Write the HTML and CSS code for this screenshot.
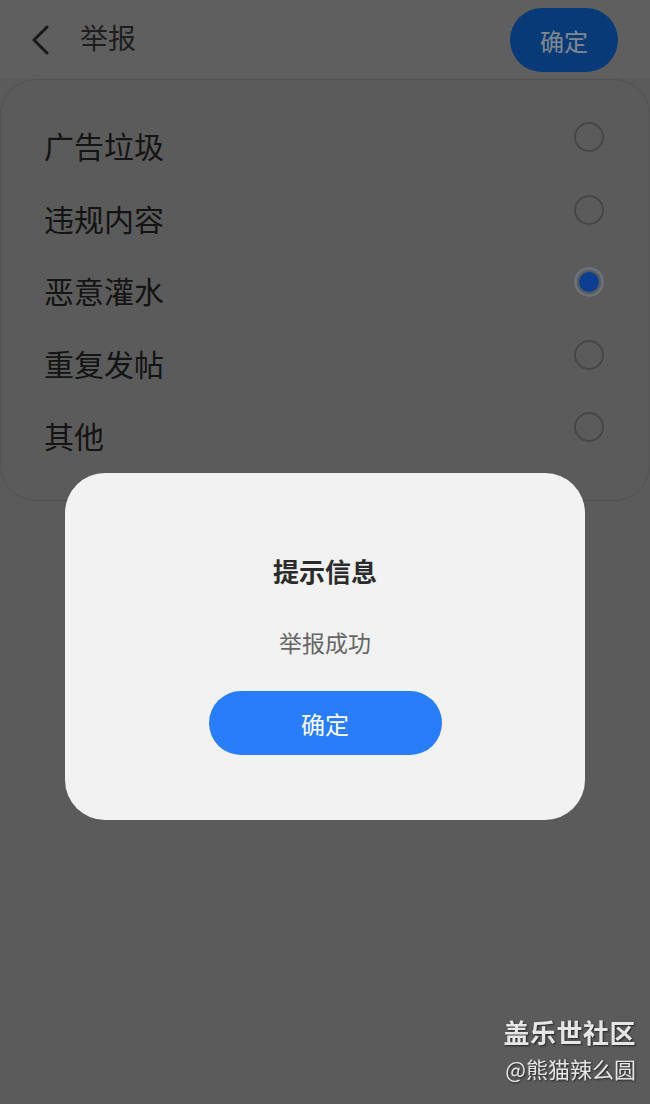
FILE: index.html
```html
<!DOCTYPE html>
<html lang="zh-CN">
<head>
  <meta charset="UTF-8">
  <title>举报</title>
  <meta name="viewport" content="width=device-width, initial-scale=1">
  <link rel="stylesheet" href="styles.css">
</head>
<body>

<header class="topbar">
  <div class="topbar-left">
    <svg class="back" width="20" height="30" viewBox="0 0 20 30">
      <path d="M17 2 L4 15 L17 28" fill="none" stroke="#2a2a2a" stroke-width="3" stroke-linecap="round" stroke-linejoin="round"/>
    </svg>
    <h1>举报</h1>
  </div>
  <button class="btn-top" type="button">确定</button>
</header>

<main class="card">
  <label class="option">
    <span>广告垃圾</span>
    <span class="radio"></span>
  </label>
  <label class="option">
    <span>违规内容</span>
    <span class="radio"></span>
  </label>
  <label class="option">
    <span>恶意灌水</span>
    <span class="radio checked"></span>
  </label>
  <label class="option">
    <span>重复发帖</span>
    <span class="radio"></span>
  </label>
  <label class="option">
    <span>其他</span>
    <span class="radio"></span>
  </label>
</main>

<!-- 弹窗 -->
<div class="mask">
  <div class="dialog">
    <h2>提示信息</h2>
    <p>举报成功</p>
    <button class="btn-ok" type="button">确定</button>
  </div>
</div>

<div class="watermark">
  <div class="wm-title">盖乐世社区</div>
  <div class="wm-user">@熊猫辣么圆</div>
</div>

</body>
</html>
```

FILE: styles.css
```css
body {
  margin: 0;
  width: 650px;
  height: 1104px;
  background: #989898;
  font-family: "Noto Sans CJK SC", "Noto Sans", sans-serif;
  overflow: hidden;
}

.topbar {
  height: 78px;
  background: #9f9f9f;
  display: flex;
  align-items: center;
  justify-content: space-between;
  padding: 0 32px 0 30px;
  box-sizing: border-box;
}

.topbar-left {
  display: flex;
  align-items: center;
}

.back {
  display: block;
  margin-top: 1px;
}

h1 {
  margin: 0 0 4px 30px;
  font-size: 28px;
  font-weight: 400;
  color: #333;
}

.btn-top {
  width: 108px;
  height: 64px;
  margin-top: 2px;
  border: none;
  border-radius: 32px;
  background: #0f62c8;
  color: #d6e2ee;
  font-family: inherit;
  font-size: 24px;
  padding: 0;
}

.card {
  margin: 1px 0 0;
  padding: 29px 45px 28px 43px;
  border: 1px solid #8a8a8a;
  border-radius: 36px;
  background: #989898;
}

.option {
  display: flex;
  justify-content: space-between;
  align-items: flex-start;
  height: 72.5px;
  line-height: 72px;
  font-size: 30px;
  color: #222;
}

.radio {
  width: 30px;
  height: 30px;
  margin-top: 13px;
  border-radius: 50%;
  border: 2px solid #767676;
  box-sizing: border-box;
  background: #989898;
}

.radio.checked {
  border: 3px solid #b4bcc6;
  background: #1469ee;
  box-shadow: inset 0 0 0 2px #989898;
}

.mask {
  position: fixed;
  inset: 0;
  background: rgba(0, 0, 0, 0.4);
  display: flex;
  justify-content: center;
  align-items: flex-start;
  padding-top: 473px;
  box-sizing: border-box;
}

.dialog {
  width: 520px;
  height: 347px;
  background: #f2f2f2;
  border-radius: 40px;
  text-align: center;
  padding-top: 80px;
  box-sizing: border-box;
}

.dialog h2 {
  margin: 0;
  font-size: 26px;
  line-height: 36px;
  font-weight: 700;
  color: #2b2b2b;
}

.dialog p {
  margin: 37px 0 0;
  font-size: 23px;
  line-height: 32px;
  color: #666;
}

.btn-ok {
  margin-top: 33px;
  width: 233px;
  height: 64px;
  border: none;
  border-radius: 32px;
  background: #2a7df8;
  color: #fff;
  font-family: inherit;
  font-size: 24px;
}

.watermark {
  position: fixed;
  right: 14px;
  top: 1013px;
  text-align: right;
  color: #e6e6e6;
  text-shadow: 1px 1px 2px #222;
}

.wm-title {
  font-size: 26px;
  font-weight: 700;
  line-height: 38px;
  letter-spacing: 0.5px;
}

.wm-user {
  font-size: 22px;
  line-height: 34px;
}
```
